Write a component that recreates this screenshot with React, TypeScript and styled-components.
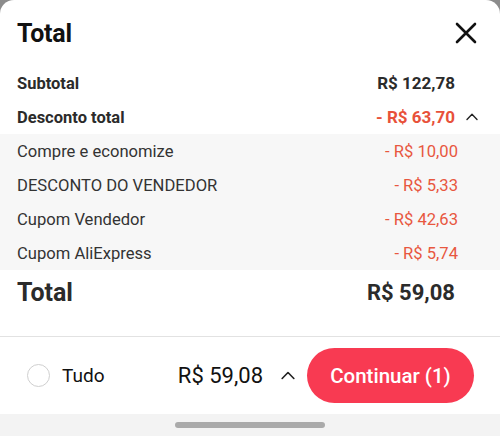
import React from 'react'
import styled, { createGlobalStyle } from 'styled-components'

type Discount = {
  label: string
  value: string
}

const discounts: Discount[] = [
  { label: 'Compre e economize', value: '- R$ 10,00' },
  { label: 'DESCONTO DO VENDEDOR', value: '- R$ 5,33' },
  { label: 'Cupom Vendedor', value: '- R$ 42,63' },
  { label: 'Cupom AliExpress', value: '- R$ 5,74' },
]

const GlobalStyle = createGlobalStyle`
  html, body {
    margin: 0;
    padding: 0;
    background: #8c8c8c;
  }
  body {
    font-family: Roboto, "Liberation Sans", Arial, sans-serif;
    -webkit-font-smoothing: antialiased;
  }
`
const SheetStyled = styled.div`
  display: flex;
  flex-direction: column;
  width: 500px;
  height: 436px;
  background: #fff;
  border-radius: 14px 14px 0 0;
  overflow: hidden;
`
const Header = styled.div`
  display: flex;
  align-items: center;
  justify-content: space-between;
  height: 66px;
  padding: 0 23px 0 17px;
`
const Title = styled.h1`
  margin: 0;
  font-size: 25px;
  font-weight: 700;
  color: #111;
  letter-spacing: -0.2px;
`
const CloseButton = styled.button`
  display: flex;
  padding: 0;
  border: none;
  background: none;
  cursor: pointer;
`
const SummaryRow = styled.div<{ tall?: boolean }>`
  display: grid;
  grid-template-columns: 1fr auto 23px;
  align-items: center;
  height: ${(p) => (p.tall ? '44px' : '34px')};
  padding: 0 22px 0 17px;
`
const SummaryLabel = styled.span<{ big?: boolean }>`
  font-size: ${(p) => (p.big ? '25px' : '16.5px')};
  font-weight: 700;
  color: #2b2b2b;
`
const SummaryValue = styled.span<{ big?: boolean; red?: boolean }>`
  font-size: ${(p) => (p.big ? '22px' : '17px')};
  font-weight: 700;
  color: ${(p) => (p.red ? '#e8513a' : '#2b2b2b')};
`
const Chevron = styled.span`
  display: flex;
  justify-content: flex-end;
`
const DetailBox = styled.div`
  background: #f7f7f7;
`
const DetailRow = styled.div`
  display: flex;
  align-items: center;
  justify-content: space-between;
  height: 34px;
  padding: 0 42px 0 17px;
  font-size: 16.6px;
  color: #333;
`
const DetailValue = styled.span`
  color: #e8573f;
`
const TotalBlock = styled.div`
  padding-bottom: 22px;
  border-bottom: 1px solid #e2e2e2;
`
const Footer = styled.div`
  display: flex;
  align-items: center;
  height: 77px;
  padding: 0 26px 0 27px;
`
const Radio = styled.span`
  width: 21px;
  height: 21px;
  border: 1.5px solid #cfcfcf;
  border-radius: 50%;
`
const AllLabel = styled.span`
  margin-left: 12px;
  font-size: 19px;
  color: #111;
`
const FooterPrice = styled.span`
  margin-left: auto;
  font-size: 22px;
  color: #111;
`
const FooterChevron = styled.span`
  display: flex;
  margin: 0 12px 0 18px;
`
const ContinueButton = styled.button`
  width: 167px;
  height: 55px;
  border: none;
  border-radius: 28px;
  background: #f83a52;
  color: #fff;
  font-family: inherit;
  font-size: 20.5px;
  font-weight: 500;
  cursor: pointer;
`
const NavBar = styled.div`
  display: flex;
  align-items: center;
  justify-content: center;
  flex: 1;
  background: #f3f3f3;
`
const HomeIndicator = styled.span`
  width: 150px;
  height: 6px;
  border-radius: 3px;
  background: #aaa;
`

const UpIcon: React.FC<{ size?: number }> = ({ size = 12 }) => (
  <svg width={size} height={size * 0.6} viewBox="0 0 12 7" fill="none">
    <path d="M1 6.3 6 1.2l5 5.1" stroke="#222" strokeWidth="1.4" strokeLinecap="round" strokeLinejoin="round" />
  </svg>
)

const App: React.FC = () => {
  return (
    <>
      <GlobalStyle />
      <SheetStyled>
        <Header>
          <Title>Total</Title>
          <CloseButton aria-label="Fechar">
            <svg width="22" height="22" viewBox="0 0 22 22">
              <path d="M2 2l18 18M20 2 2 20" stroke="#111" strokeWidth="2.6" strokeLinecap="round" />
            </svg>
          </CloseButton>
        </Header>
        <SummaryRow>
          <SummaryLabel>Subtotal</SummaryLabel>
          <SummaryValue>R$ 122,78</SummaryValue>
          <span />
        </SummaryRow>
        <SummaryRow>
          <SummaryLabel>Desconto total</SummaryLabel>
          <SummaryValue red>- R$ 63,70</SummaryValue>
          <Chevron>
            <UpIcon />
          </Chevron>
        </SummaryRow>
        <DetailBox>
          {discounts.map((item) => (
            <DetailRow key={item.label}>
              <span>{item.label}</span>
              <DetailValue>{item.value}</DetailValue>
            </DetailRow>
          ))}
        </DetailBox>
        <TotalBlock>
          <SummaryRow tall>
            <SummaryLabel big>Total</SummaryLabel>
            <SummaryValue big>R$ 59,08</SummaryValue>
            <span />
          </SummaryRow>
        </TotalBlock>
        <Footer>
          <Radio />
          <AllLabel>Tudo</AllLabel>
          <FooterPrice>R$ 59,08</FooterPrice>
          <FooterChevron>
            <UpIcon size={14} />
          </FooterChevron>
          <ContinueButton>Continuar (1)</ContinueButton>
        </Footer>
        <NavBar>
          <HomeIndicator />
        </NavBar>
      </SheetStyled>
    </>
  )
}

export default App
